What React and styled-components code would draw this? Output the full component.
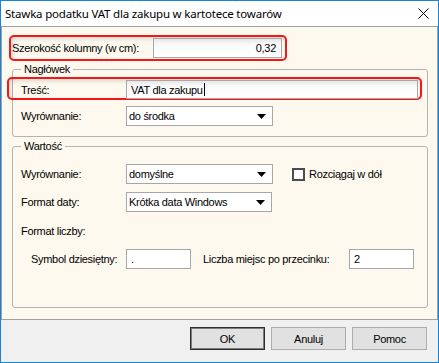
import React from "react";
import styled, { createGlobalStyle, css } from "styled-components";

const CREAM = "#fef9ee";

const Global = createGlobalStyle`
  html, body { margin: 0; padding: 0; background: #fff; }
  body { font-family: "Liberation Sans", Arial, sans-serif; font-size: 11px; letter-spacing: -0.3px; color: #000; }
  * { box-sizing: border-box; }
`;

const Window = styled.div`
  width: 439px;
  height: 363px;
  border: 1px solid #1883d7;
  display: flex;
  flex-direction: column;
  background: #f0f0f0;
  overflow: hidden;
`;

const TitleBar = styled.div`
  flex: none;
  height: 25px;
  background: #fff;
  display: flex;
  align-items: center;
  justify-content: space-between;
  padding: 0 9px 0 4px;
  font-family: "Noto Sans", "Open Sans", sans-serif;
  font-size: 11.5px;
  letter-spacing: -0.2px;
`;

const Panel = styled.div`
  flex: none;
  height: 294px;
  background: ${CREAM};
  border: 1px solid #a0a0a0;
  padding: 11px 9px 0 10px;
  display: flex;
  flex-direction: column;
`;

const Highlight = styled.div`
  position: relative;
  isolation: isolate;
  &::before {
    content: "";
    position: absolute;
    top: ${(p) => p.$t}px;
    bottom: ${(p) => p.$b}px;
    left: ${(p) => p.$l}px;
    right: ${(p) => p.$r}px;
    border: 2px solid #f21818;
    border-radius: 5px;
    box-shadow: inset 2px 2px 4px rgba(0, 0, 0, 0.14);
    z-index: -1;
    pointer-events: none;
  }
`;

const Row = styled.div`
  display: flex;
  align-items: center;
  margin-top: ${(p) => p.$mt || 0}px;
  padding-left: ${(p) => p.$indent || 0}px;
`;

const HighlightRow = styled(Highlight)`
  display: flex;
  align-items: center;
  margin-top: ${(p) => p.$mt || 0}px;
  width: ${(p) => (p.$w ? `${p.$w}px` : "auto")};
`;

const Label = styled.span`
  flex: none;
  width: ${(p) => p.$w}px;
  margin-left: ${(p) => p.$ml || 0}px;
  white-space: nowrap;
`;

const Field = styled.div`
  flex: ${(p) => (p.$w ? "none" : "1")};
  width: ${(p) => (p.$w ? `${p.$w}px` : "auto")};
  height: ${(p) => p.$h || 20}px;
  border: 1px solid #a7a7a7;
  background: #fff;
  display: flex;
  align-items: center;
  justify-content: ${(p) => (p.$right ? "flex-end" : "flex-start")};
  padding: 0 5px 0 4px;
  white-space: nowrap;
  ${(p) =>
    p.$sunken &&
    css`
      background: linear-gradient(to bottom, #e6e6e6 0px, #fafafa 5px, #fff 100%);
    `}
`;

const Caret = styled.span`
  display: inline-block;
  width: 1px;
  height: 13px;
  background: #000;
  margin-left: 1px;
`;

const Select = styled.div`
  flex: none;
  width: ${(p) => p.$w}px;
  height: 20px;
  border: 1px solid #a7a7a7;
  background: #fff;
  display: flex;
  align-items: center;
  justify-content: space-between;
  padding: 0 6px 0 2px;
  white-space: nowrap;
`;

const Group = styled.div`
  flex: none;
  height: ${(p) => p.$h}px;
  margin-top: ${(p) => p.$mt}px;
  border: 1px solid #b4b4b4;
  border-radius: 3px;
  padding: 0 9px 0 8px;
`;

const Legend = styled.div`
  width: fit-content;
  margin-top: -7px;
  padding: 0 3px;
  line-height: 13px;
  background: ${CREAM};
`;

const Text = styled.div`
  line-height: 13px;
  margin-top: ${(p) => p.$mt || 0}px;
`;

const CheckBox = styled.span`
  flex: none;
  width: 13px;
  height: 13px;
  border: 2px solid #4c4c4c;
  background: #fff;
  margin-left: ${(p) => p.$ml}px;
  margin-right: 4px;
`;

const Footer = styled.div`
  flex: 1;
  display: flex;
  justify-content: flex-end;
  align-items: flex-start;
  gap: 6px;
  padding: 7px 11px 0 0;
`;

const Button = styled.div`
  width: 75px;
  height: 23px;
  display: flex;
  align-items: center;
  justify-content: center;
  background: #e1e1e1;
  border: 1px solid #adadad;
  ${(p) =>
    p.$default &&
    css`
      border-color: #2d2d2d;
      box-shadow: inset 0 0 0 1px #7d7d7d;
    `}
`;

const Arrow = () => (
  <svg width="9" height="5" viewBox="0 0 9 5">
    <polygon points="0,0 9,0 4.5,5" fill="#000" />
  </svg>
);

const Close = () => (
  <svg width="11" height="11" viewBox="0 0 11 11">
    <path d="M0.5 0.5 L10.5 10.5 M10.5 0.5 L0.5 10.5" stroke="#000" strokeWidth="1" fill="none" />
  </svg>
);

export default function App() {
  return (
    <>
      <Global />
      <Window>
        <TitleBar>
          <span>Stawka podatku VAT dla zakupu w kartotece towarów</span>
          <Close />
        </TitleBar>
        <Panel>
          <HighlightRow $w={270} $t={-3} $b={-3} $l={-3} $r={-5}>
            <Label $w={141}>Szerokość kolumny (w cm):</Label>
            <Field $w={129} $right $sunken>
              0,32
            </Field>
          </HighlightRow>

          <Group $mt={11} $h={68}>
            <Legend>Nagłówek</Legend>
            <HighlightRow $mt={4} $t={-3} $b={-1} $l={-14} $r={-4}>
              <Label $w={105}>Treść:</Label>
              <Field $h={19} $sunken>
                VAT dla zakupu
                <Caret />
              </Field>
            </HighlightRow>
            <Row $mt={7}>
              <Label $w={105}>Wyrównanie:</Label>
              <Select $w={147}>
                <span>do środka</span>
                <Arrow />
              </Select>
            </Row>
          </Group>

          <Group $mt={9} $h={162}>
            <Legend>Wartość</Legend>
            <Row $mt={11}>
              <Label $w={105}>Wyrównanie:</Label>
              <Select $w={147}>
                <span>domyślne</span>
                <Arrow />
              </Select>
              <CheckBox $ml={19} />
              <span>Rozciągaj w dół</span>
            </Row>
            <Row $mt={8}>
              <Label $w={105}>Format daty:</Label>
              <Select $w={146}>
                <span>Krótka data Windows</span>
                <Arrow />
              </Select>
            </Row>
            <Text $mt={13}>Format liczby:</Text>
            <Row $mt={11} $indent={10}>
              <Label $w={95}>Symbol dziesiętny:</Label>
              <Field $w={65}>.</Field>
              <Label $w={146} $ml={12}>
                Liczba miejsc po przecinku:
              </Label>
              <Field $w={65}>2</Field>
            </Row>
          </Group>
        </Panel>
        <Footer>
          <Button $default>OK</Button>
          <Button>Anuluj</Button>
          <Button>Pomoc</Button>
        </Footer>
      </Window>
    </>
  );
}
